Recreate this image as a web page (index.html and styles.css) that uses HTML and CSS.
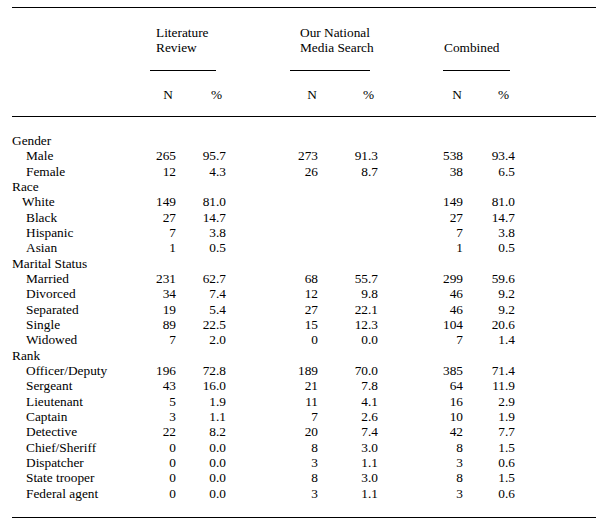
FILE: index.html
```html
<!DOCTYPE html>
<html>
<head>
<meta charset="utf-8">
<link rel="stylesheet" href="styles.css">
</head>
<body>
<div class="table">
  <div class="head">
    <div class="groups">
      <div class="group g-lit"><div class="gtext">Literature<br>Review</div><div class="uline"></div></div>
      <div class="group g-nat"><div class="gtext">Our National<br>Media Search</div><div class="uline"></div></div>
      <div class="group g-comb"><div class="gtext">Combined</div><div class="uline"></div></div>
    </div>
    <div class="row colhead">
      <div></div>
      <div class="hn1">N</div><div class="hp1">%</div>
      <div class="hn2">N</div><div class="hp2">%</div>
      <div class="hn3">N</div><div class="hp3">%</div>
    </div>
  </div>
  <div class="body">
    <div class="row"><div class="cat">Gender</div></div>
    <div class="row"><div class="sub">Male</div><div>265</div><div>95.7</div><div>273</div><div>91.3</div><div>538</div><div>93.4</div></div>
    <div class="row"><div class="sub">Female</div><div>12</div><div>4.3</div><div>26</div><div>8.7</div><div>38</div><div>6.5</div></div>
    <div class="row"><div class="cat">Race</div></div>
    <div class="row"><div class="sub sub-w">White</div><div>149</div><div>81.0</div><div></div><div></div><div>149</div><div>81.0</div></div>
    <div class="row"><div class="sub">Black</div><div>27</div><div>14.7</div><div></div><div></div><div>27</div><div>14.7</div></div>
    <div class="row"><div class="sub">Hispanic</div><div>7</div><div>3.8</div><div></div><div></div><div>7</div><div>3.8</div></div>
    <div class="row"><div class="sub">Asian</div><div>1</div><div>0.5</div><div></div><div></div><div>1</div><div>0.5</div></div>
    <div class="row"><div class="cat">Marital Status</div></div>
    <div class="row"><div class="sub">Married</div><div>231</div><div>62.7</div><div>68</div><div>55.7</div><div>299</div><div>59.6</div></div>
    <div class="row"><div class="sub">Divorced</div><div>34</div><div>7.4</div><div>12</div><div>9.8</div><div>46</div><div>9.2</div></div>
    <div class="row"><div class="sub">Separated</div><div>19</div><div>5.4</div><div>27</div><div>22.1</div><div>46</div><div>9.2</div></div>
    <div class="row"><div class="sub">Single</div><div>89</div><div>22.5</div><div>15</div><div>12.3</div><div>104</div><div>20.6</div></div>
    <div class="row"><div class="sub">Widowed</div><div>7</div><div>2.0</div><div>0</div><div>0.0</div><div>7</div><div>1.4</div></div>
    <div class="row"><div class="cat">Rank</div></div>
    <div class="row"><div class="sub">Officer/Deputy</div><div>196</div><div>72.8</div><div>189</div><div>70.0</div><div>385</div><div>71.4</div></div>
    <div class="row"><div class="sub">Sergeant</div><div>43</div><div>16.0</div><div>21</div><div>7.8</div><div>64</div><div>11.9</div></div>
    <div class="row"><div class="sub">Lieutenant</div><div>5</div><div>1.9</div><div>11</div><div>4.1</div><div>16</div><div>2.9</div></div>
    <div class="row"><div class="sub">Captain</div><div>3</div><div>1.1</div><div>7</div><div>2.6</div><div>10</div><div>1.9</div></div>
    <div class="row"><div class="sub">Detective</div><div>22</div><div>8.2</div><div>20</div><div>7.4</div><div>42</div><div>7.7</div></div>
    <div class="row"><div class="sub">Chief/Sheriff</div><div>0</div><div>0.0</div><div>8</div><div>3.0</div><div>8</div><div>1.5</div></div>
    <div class="row"><div class="sub">Dispatcher</div><div>0</div><div>0.0</div><div>3</div><div>1.1</div><div>3</div><div>0.6</div></div>
    <div class="row"><div class="sub">State trooper</div><div>0</div><div>0.0</div><div>8</div><div>3.0</div><div>8</div><div>1.5</div></div>
    <div class="row"><div class="sub">Federal agent</div><div>0</div><div>0.0</div><div>3</div><div>1.1</div><div>3</div><div>0.6</div></div>
  </div>
</div>
</body>
</html>
```
FILE: styles.css
```css
html, body {
  margin: 0;
  padding: 0;
  background: #fff;
}
body {
  font-family: "Liberation Serif", "Times New Roman", serif;
  font-size: 13.33px;
  line-height: 15.33px;
  color: #000;
}
.table {
  margin: 7px 0 0 12px;
  width: 584px;
  border-top: 1px solid #000;
  border-bottom: 1px solid #000;
}
.head {
  padding-top: 17px;
  padding-bottom: 14px;
  border-bottom: 1px solid #000;
}
.groups {
  display: grid;
  grid-template-columns: 124px 90px 152px 137px;
}
.groups .g-lit { grid-column: 2; }
.groups .g-nat { grid-column: 3; }
.groups .g-comb { grid-column: 4; }
.group {
  display: flex;
  flex-direction: column;
  justify-content: flex-end;
}
.gtext {
  white-space: nowrap;
}
.uline {
  height: 1px;
  background: #000;
  margin-top: 14px;
}
.g-lit .gtext { margin-left: 20px; }
.g-lit .uline { margin-left: 14px; width: 66px; }
.g-nat .gtext { margin-left: 74px; }
.g-nat .uline { margin-left: 64px; width: 80px; }
.g-comb .gtext { margin-left: 66px; }
.g-comb .uline { margin-left: 65px; width: 67px; }

.row {
  display: grid;
  grid-template-columns: 124px 40px 50px 92px 60px 85px 52px;
  height: 15.33px;
  text-align: right;
  white-space: nowrap;
}
.row > div:first-child {
  text-align: left;
}
.colhead {
  margin-top: 16px;
}
.colhead .hn1 { padding-right: 3px; }
.colhead .hp1 { padding-right: 4px; }
.colhead .hn2 { padding-right: 1px; }
.colhead .hp2 { padding-right: 4px; }
.colhead .hn3 { padding-right: 1px; }
.colhead .hp3 { padding-right: 6px; }

.body {
  padding-top: 16px;
  padding-bottom: 16px;
}
.cat { padding-left: 0; }
.sub { padding-left: 14px; }
.sub-w { padding-left: 10px; }
```
